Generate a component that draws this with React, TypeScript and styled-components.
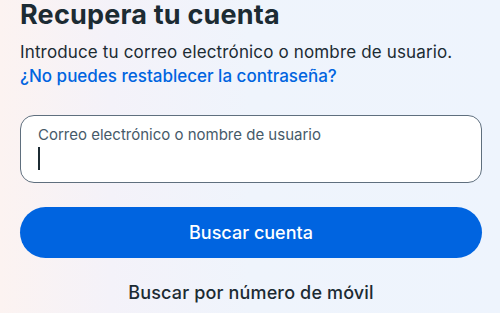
import React from "react";
import styled, { createGlobalStyle } from "styled-components";

const GlobalStyle = createGlobalStyle`
  html, body {
    margin: 0;
    padding: 0;
  }
  body {
    font-family: Inter, "Noto Sans", "Liberation Sans", sans-serif;
    background: #eef4fd;
  }
`;

const Page = styled.main`
  width: 500px;
  height: 313px;
  overflow: hidden;
  box-sizing: border-box;
  padding: 0 18px 0 20px;
  background: linear-gradient(90deg, #fcf3f1 0%, #f4f2f9 22%, #eff4fc 50%, #eef4fd 100%);
  display: flex;
  flex-direction: column;
`;

const Title = styled.h1`
  margin: 0;
  font-size: 27px;
  line-height: 30px;
  font-weight: 700;
  color: #1c2b33;
  letter-spacing: 0.2px;
`;

const Intro = styled.p`
  margin: 10px 0 0;
  font-size: 17px;
  line-height: 24px;
  font-weight: 400;
  letter-spacing: 0.15px;
  color: #1c2b33;
`;

const HelpLink = styled.a`
  display: block;
  font-size: 17px;
  line-height: 24px;
  font-weight: 500;
  color: #0064e0;
  text-decoration: none;
`;

const Field = styled.label`
  margin-top: 27px;
  height: 68px;
  box-sizing: border-box;
  border: 1px solid #5f6f7e;
  border-radius: 14px;
  background: #ffffff;
  padding: 9px 17px 0;
  display: flex;
  flex-direction: column;
`;

const FieldLabel = styled.span`
  font-size: 15px;
  line-height: 20px;
  color: #465a69;
`;

const Caret = styled.span`
  margin-top: 2px;
  width: 2px;
  height: 23px;
  background: #1c2b33;
`;

const PrimaryButton = styled.button`
  margin-top: 24px;
  height: 51px;
  border: none;
  border-radius: 26px;
  background: #0064e0;
  color: #ffffff;
  font-family: inherit;
  font-size: 18px;
  font-weight: 500;
  cursor: pointer;
`;

const SecondaryButton = styled.button`
  margin-top: 22px;
  border: none;
  background: transparent;
  color: #1c2b33;
  font-family: inherit;
  font-size: 18px;
  font-weight: 500;
  letter-spacing: 0.15px;
  line-height: 24px;
  cursor: pointer;
`;

export default function App() {
  return (
    <>
      <GlobalStyle />
      <Page>
        <Title>Recupera tu cuenta</Title>
        <Intro>Introduce tu correo electrónico o nombre de usuario.</Intro>
        <HelpLink href="#">¿No puedes restablecer la contraseña?</HelpLink>
        <Field>
          <FieldLabel>Correo electrónico o nombre de usuario</FieldLabel>
          <Caret />
        </Field>
        <PrimaryButton>Buscar cuenta</PrimaryButton>
        <SecondaryButton>Buscar por número de móvil</SecondaryButton>
      </Page>
    </>
  );
}
